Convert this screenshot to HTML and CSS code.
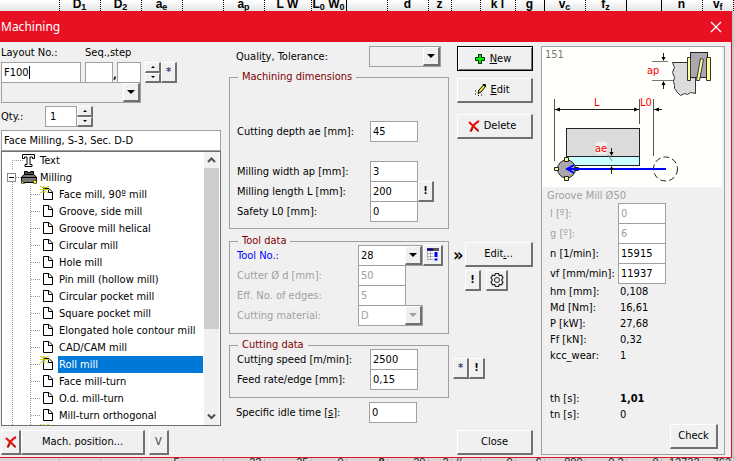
FILE: index.html
```
<!DOCTYPE html>
<html lang="en">
<head>
<meta charset="utf-8">
<title>Machining</title>
<link rel="stylesheet" href="styles.css">
</head>
<body>
<svg width="0" height="0" class="defs" aria-hidden="true">
  <symbol id="page" viewBox="0 0 12 14"><path d="M1.5 1.5h5.500l3.500 3.500v7.500h-9z" fill="#fff" stroke="#000"/><path d="M6.500 1.500v4h4" fill="none" stroke="#000"/></symbol>
  <symbol id="spark" viewBox="0 0 9 7"><path d="M0 .5h2M7 .5h2M3 1.500h1M5 1.500h1M0 3.500h9M3 5.500h1M5 5.500h1M0 6.500h2M7 6.500h1" stroke="#d8d800"/><path d="M2 1.500h1M4 0v7M6 1.500h1M2 5.500h1" stroke="#a8a83a"/></symbol>
  <symbol id="cross" viewBox="0 0 12 12"><path d="M1 2l9.500 9M11 1C7 3 4 7 2.500 11.500" fill="none" stroke="#e80c0c" stroke-width="2"/><path d="M3 11.500l2-3M8 9l2.500 2.500" stroke="#7a1010" fill="none"/></symbol>
</svg>
<div class="shell">
  <table class="sheet sheet-top">
    <colgroup><col class="w59"><col class="w41"><col class="w41"><col class="w41"><col class="w41"><col class="w41"><col class="w47"><col class="w35"><col class="w41"><col class="w41"><col class="w23"><col class="w29"><col class="w35"><col class="w29"><col class="w41"><col class="w41"><col class="w35"><col class="w41"><col></colgroup>
    <tr><th></th><th>D<sub>1</sub></th><th>D<sub>2</sub></th><th>a<sub>e</sub></th><th></th><th>a<sub>p</sub></th><th>L W</th><th class="solid">L<sub>0</sub> W<sub>0</sub></th><th></th><th>d</th><th>z</th><th></th><th>k l</th><th class="solid">g</th><th>v<sub>c</sub></th><th class="solid">f<sub>z</sub></th><th class="solid"></th><th>n</th><th>v<sub>f</sub></th></tr>
  </table>

  <main class="dialog">
    <header class="titlebar">
      <h1>Machining</h1>
      <button class="close" aria-label="Close window"><svg width="12" height="12" viewBox="0 0 12 12"><path d="M1 1l10 10M11 1L1 11" stroke="#fff" stroke-width="1.300"/></svg></button>
    </header>
    <div class="content">
      <section class="left">
        <div class="names"><label for="layout">Layout No.:</label><label for="seq">Seq.,step</label></div>
        <div class="line">
          <div class="field"><input id="layout" class="layout" value="F100"><i class="caret"></i></div>
          <input id="seq" class="seq" aria-label="Sequence">
          <b class="comma">,</b>
          <input class="step" aria-label="Step">
          <span class="spin"><button aria-label="Step up"><i class="up"></i></button><button aria-label="Step down"><i class="down"></i></button></span>
          <button class="tiny star">*</button>
        </div>
        <div class="combo wide"><select aria-label="Layout description"><option></option></select><i class="drop"></i></div>
        <div class="qty">
          <label for="qty">Qty.:</label>
          <input id="qty" value="1">
          <span class="spin"><button aria-label="Quantity up"><i class="up"></i></button><button aria-label="Quantity down"><i class="down"></i></button></span>
        </div>
        <input class="desc" aria-label="Description" value="Face Milling, S-3, Sec. D-D">
        <div class="tree">
          <ul>
            <li class="root"><svg class="ico" width="15" height="15" viewBox="0 0 15 15"><path d="M1.500 1.500h12v4h-2v-1.500h-2.500v7.500h2v2h-7v-2h2v-7.500h-2.500v1.500h-2z" fill="#fff" stroke="#000"/></svg>Text</li>
            <li class="root open"><i class="minus"></i><svg class="ico" width="16" height="15" viewBox="0 0 16 15"><path d="M3.500 1.500h3v1h3v-1h3v3h-9z" fill="#555" stroke="#000"/><path d="M.5 7l3-2.500h9l3 2.500v5.500h-15z" fill="#777" stroke="#000"/><path d="M1 7.500h14" stroke="#000"/><path d="M.5 10.500l3 3h-3zM12.500 10.500h3v3h-3z" fill="#ff0" stroke="#222" stroke-width=".6"/></svg>Milling
              <ul>
                <li><svg class="pg"><use href="#page"/></svg><svg class="sp"><use href="#spark"/></svg><span>Face mill, 90º mill</span></li>
                <li><svg class="pg"><use href="#page"/></svg><span>Groove, side mill</span></li>
                <li><svg class="pg"><use href="#page"/></svg><span>Groove mill helical</span></li>
                <li><svg class="pg"><use href="#page"/></svg><span>Circular mill</span></li>
                <li><svg class="pg"><use href="#page"/></svg><span>Hole mill</span></li>
                <li><svg class="pg"><use href="#page"/></svg><span>Pin mill (hollow mill)</span></li>
                <li><svg class="pg"><use href="#page"/></svg><span>Circular pocket mill</span></li>
                <li><svg class="pg"><use href="#page"/></svg><span>Square pocket mill</span></li>
                <li><svg class="pg"><use href="#page"/></svg><span>Elongated hole contour mill</span></li>
                <li><svg class="pg"><use href="#page"/></svg><span>CAD/CAM mill</span></li>
                <li><svg class="pg"><use href="#page"/></svg><svg class="sp"><use href="#spark"/></svg><span class="selected">Roll mill</span></li>
                <li><svg class="pg"><use href="#page"/></svg><span>Face mill-turn</span></li>
                <li><svg class="pg"><use href="#page"/></svg><span>O.d. mill-turn</span></li>
                <li><svg class="pg"><use href="#page"/></svg><span>Mill-turn orthogonal</span></li>
                <li><svg class="sp"><use href="#spark"/></svg></li>
              </ul>
            </li>
          </ul>
          <div class="scroll">
            <svg width="15" height="16" viewBox="0 0 15 16"><path d="M4 10l3.500-3.500L11 10" fill="none" stroke="#505050" stroke-width="2"/></svg>
            <div class="track"><div class="thumb"></div></div>
            <svg width="15" height="17" viewBox="0 0 15 17"><path d="M4 6.500l3.500 3.500L11 6.500" fill="none" stroke="#505050" stroke-width="2"/></svg>
          </div>
        </div>
        <div class="foot">
          <button class="del" aria-label="Delete"><svg width="12" height="12"><use href="#cross"/></svg></button>
          <button class="mach">Mach. position...</button>
          <button class="vee">V</button>
        </div>
      </section>

      <section class="mid">
        <div class="row outer quality"><label for="tol">Quali<u>t</u>y, Tolerance:</label><div class="combo"><select id="tol"><option></option></select><i class="drop"></i></div></div>
        <fieldset class="dims">
          <legend>Machining dimensions</legend>
          <div class="row apart"><label for="ae">Cutting depth ae [mm]:</label><input id="ae" value="45"></div>
          <div class="row"><label for="ap">Milling width ap [mm]:</label><input id="ap" value="3"></div>
          <div class="row"><label for="len">Milling length L [mm]:</label><input id="len" value="200"><button class="tiny">!</button></div>
          <div class="row"><label for="safe">Safety L0 [mm]:</label><input id="safe" value="0"></div>
        </fieldset>
        <fieldset class="tool">
          <legend>Tool data</legend>
          <div class="row"><label class="link" for="toolno">Tool No.:</label><div class="combo white"><select id="toolno"><option>28</option></select><i class="drop"></i></div><button class="tiny list" aria-label="Tool list"><svg width="14" height="14" viewBox="0 0 14 14"><path d="M1 1.500h12" stroke="#555" stroke-width="3"/><path d="M1 1.500h6" stroke="#008" stroke-width="2"/><path d="M1 3h6v9h-6z" fill="#fff"/><path d="M1 5.500h6M1 8.500h6M1 11.500h6M1.500 3v9M4.500 3v9" stroke="#aaa"/><path d="M10 4v5M10 10.500v2" stroke="#00f" stroke-width="3"/></svg></button></div>
          <div class="row off"><label for="dia">Cutter Ø d [mm]:</label><input id="dia" value="50" disabled></div>
          <div class="row off"><label for="edges">Eff. No. of edges:</label><input id="edges" value="5" disabled></div>
          <div class="row off"><label for="mat">Cutting material:</label><div class="combo white"><select id="mat" disabled><option>D</option></select><i class="drop"></i></div></div>
        </fieldset>
        <fieldset class="cut">
          <legend>Cutting data</legend>
          <div class="row"><label for="speed">Cutt<u>i</u>ng speed [m/min]:</label><input id="speed" value="2500"></div>
          <div class="row"><label for="feed">Feed rate/edge [mm]:</label><input id="feed" value="0,15"></div>
        </fieldset>
        <div class="row outer idle"><label for="idle">Specific idle time [<u>s</u>]:</label><input id="idle" value="0"></div>
      </section>

      <section class="actions">
        <div class="big">
          <button class="default"><svg width="12" height="12" viewBox="0 0 12 12"><path d="M4.500 1.500h3v3h3v3h-3v3h-3v-3h-3v-3h3z" fill="#0e0" stroke="#020"/></svg><span><u>N</u>ew</span></button>
          <button><svg width="12" height="12" viewBox="0 0 12 12"><path d="M4 9.500l1-3.500 4.500-5 2 1.500-4.500 5.500z" fill="#ee3" stroke="#000"/><path d="M9 0l3 2" stroke="#000" stroke-width="2"/><path d="M1 7h1M1 10h1M4 11.500h1M7 11h1" stroke="#000"/></svg><span><u>E</u>dit</span></button>
          <button class="delete"><svg width="12" height="12"><use href="#cross"/></svg><span>Delete</span></button>
        </div>
        <div class="tooledit">
          <b>»</b><button class="edit2">Edit<u>.</u>..</button>
          <div class="pair"><button class="tiny">!</button><button class="tiny gear" aria-label="Settings"><svg width="16" height="16" viewBox="0 0 16 16" fill="none" stroke="#222"><path d="M6.500 1.500h3l.8 2 2.200-.3 1.500 2.600-1.400 2.200 1.400 2.200-1.500 2.600-2.200-.3-.8 2h-3l-.8-2-2.200.3L2 10.200 3.400 8 2 5.800l1.500-2.600 2.200.3z" stroke-width="1.200"/><circle cx="8" cy="8" r="2.500"/></svg></button></div>
        </div>
        <div class="marks"><button class="tiny star">*</button><button class="tiny">!</button></div>
        <button class="shut">Close</button>
      </section>

      <section class="results">
        <svg class="diagram" viewBox="0 0 180 140" preserveAspectRatio="xMinYMin meet">
          <rect width="180" height="140" fill="#fffffc"/>
          <text x="3" y="11" class="num">151</text>
          <g stroke="#222" fill="none">
            <path d="M110 14.500h16M110 33.500h29" stroke="#777"/>
            <path d="M148 15.500h-17.500l2 5-2 5 2 5-1 4 1 4v3l3 4 3 3 4-2 3 1 3-2 5 1v-31z" fill="#dcdcdc" stroke="#333"/>
            <rect x="148.500" y="5.500" width="17" height="25" fill="#aaa8ac"/>
            <path d="M145.500 10.500h3v23h-3zM164.500 10.500h4v23h-4zM158.500 11.500l3 1-4 21h-3z" fill="#ffffa0" stroke="#333"/>
            <path d="M121.500 6v7M121.500 35v7"/>
            <path d="M12.500 52v62M97.500 52v25M111.500 52v57" stroke="#555"/>
            <path d="M13 62.500h84M112 62.500h8"/>
            <rect x="24.500" y="81.500" width="73" height="28" fill="#dcdcdc"/>
            <rect x="24.500" y="109.500" width="73" height="9" fill="#ccffff"/>
            <path d="M69.500 101v5M69.500 121v6"/>
            <path d="M66 108l4 6" stroke="#888"/>
            <circle cx="24.500" cy="122" r="9" fill="#a9a9ad"/>
            <path d="M22.500 110.500h4v4h-4zM22.500 129.500h4v4h-4zM12.500 120.500h4v3h-4zM32.500 120.500h4v3h-4z" fill="#ffff99"/>
            <circle cx="123.500" cy="122" r="12" stroke-dasharray="6 3"/>
            <path d="M27 122h97M32 118l-7 4 7 4" stroke="#00f" stroke-width="2"/>
          </g>
          <path d="M119.500 10h4l-2 4zM119.500 38h4l-2-4zM13 62.500l5-2v4zM97 62.500l-5-2v4zM112 62.500l5-2v4zM67.500 105h4l-2 4zM67.500 123h4l-2-4z"/>
          <rect x="54" y="95" width="11" height="12" fill="#f0f0f0"/>
          <g class="dim"><text x="105" y="27">ap</text><text x="52" y="59">L</text><text x="98" y="59">L0</text><text x="53" y="105">ae</text></g>
        </svg>
        <p class="toolname">Groove Mill Ø50</p>
        <div class="res off"><label for="l">l [º]:</label><input id="l" value="0" disabled></div>
        <div class="res off"><label for="g">g [º]:</label><input id="g" value="6" disabled></div>
        <div class="res"><label for="n">n [1/min]:</label><input id="n" value="15915"></div>
        <div class="res"><label for="vf">vf [mm/min]:</label><input id="vf" value="11937"></div>
        <dl>
          <dt>hm [mm]:</dt><dd>0,108</dd>
          <dt>Md [Nm]:</dt><dd>16,61</dd>
          <dt>P [kW]:</dt><dd>27,68</dd>
          <dt>Ff [kN]:</dt><dd>0,32</dd>
          <dt>kcc_wear:</dt><dd>1</dd>
        </dl>
        <dl class="times">
          <dt>th [s]:</dt><dd><b>1,01</b></dd>
          <dt>tn [s]:</dt><dd>0</dd>
        </dl>
        <button class="check">Check</button>
      </section>
    </div>
  </main>
  <aside class="edge"></aside>
  <div class="under">
    <table class="sheet sheet-bottom">
      <colgroup><col class="w59"><col class="w41"><col class="w41"><col class="w41"><col class="w41"><col class="w41"><col class="w47"><col class="w35"><col class="w41"><col class="w41"><col class="w23"><col class="w29"><col class="w35"><col class="w29"><col class="w41"><col class="w41"><col class="w35"><col class="w41"><col></colgroup>
      <tr><td></td><td></td><td></td><td>5</td><td></td><td>22</td><td>25</td><td>0</td><td><b>8</b></td><td>20</td><td>2</td><td class="start">//</td><td>0</td><td>6</td><td>800</td><td>0.2</td><td>0</td><td>12732</td><td>762</td></tr>
    </table>
  </div>
</div>
</body>
</html>
```
FILE: styles.css
```
* { box-sizing: border-box; }
body { margin: 0; font: 11px/14px "DejaVu Sans Condensed", "DejaVu Sans", sans-serif; color: #000; }
.defs { position: absolute; }
.shell { display: grid; grid-template: 11px minmax(0, 1fr) 3px / minmax(0, 1fr) 2px; height: 100vh; overflow: hidden; background: #ddd; }
button, input, select { font: inherit; color: inherit; margin: 0; padding: 0; border-radius: 0; }
button { display: flex; align-items: center; justify-content: center; background: #f0f0f0; border: 1px solid #fff; border-right: 2px solid #707070; border-bottom: 2px solid #707070; }
input { height: 21px; padding: 0 0 0 2px; border: 1px solid #a0a0a0; background: #fff; width: 48px; min-width: 0; outline: 0; }
p, h1, dl, dd, ul, fieldset, legend { margin: 0; padding: 0; }
ul { list-style: none; }

.sheet { width: 100%; table-layout: fixed; border-collapse: collapse; font-family: "Liberation Sans", sans-serif; }
.sheet th, .sheet td { padding: 0; white-space: nowrap; }
.sheet-top { grid-column: 1 / 3; height: 11px; background: linear-gradient(#fff, #e4e4e4); }
.sheet-top th { font-size: 12px; line-height: 8px; height: 11px; border-right: 1px dotted #000; vertical-align: top; }
.sheet-top th.solid { border-right: 1px solid #000; }
.sheet-top sub { font-size: 9px; line-height: 4px; vertical-align: -2px; }
.under { grid-column: 1 / 3; height: 3px; overflow: hidden; background: #d8d8d8; }
.sheet-bottom td { font-size: 11px; line-height: 8px; text-align: right; padding-right: 2px; border-right: 1px solid #bbb; color: #222; }
.sheet-bottom td.start { text-align: left; padding-left: 4px; }
.w59 { width: 59px; } .w47 { width: 47px; } .w41 { width: 41px; } .w35 { width: 35px; } .w29 { width: 29px; } .w23 { width: 23px; }
.edge { background: #c8c8c8; }

.dialog { display: flex; flex-direction: column; background: #f0f0f0; border-right: 1px solid #e81123; border-bottom: 1px solid #e81123; min-height: 0; }
.titlebar { display: flex; justify-content: space-between; align-items: center; height: 31px; padding: 0 9px 0 1px; background: #e81123; color: #fff; }
.titlebar h1 { font: 12px/16px "Noto Sans", sans-serif; }
.close { background: none; border: 0; }
.content { flex: 1; min-height: 0; display: grid; grid-template-columns: 220fr 228fr 92fr 184fr; padding: 4px 6px 2px 1px; }

.left { display: flex; flex-direction: column; min-height: 0; }
.names { display: flex; height: 16px; }
.names label:first-child { width: 84px; }
.line { display: flex; height: 20px; }
.field { position: relative; }
.caret { position: absolute; left: 28px; top: 4px; width: 1px; height: 13px; background: #000; }
.line .layout { width: 80px; }
.line .seq { width: 28px; margin-left: 4px; }
.line .step { width: 24px; }
.comma { width: 4px; padding-top: 6px; }
.spin { display: flex; flex-direction: column; width: 16px; height: 21px; margin-left: 4px; }
.spin button { flex: 1; width: 16px; min-height: 0; }
.spin i { border: 2px solid transparent; }
.spin .up { border-top: 0; border-bottom-color: #000; }
.spin .down { border-bottom: 0; border-top-color: #000; }
.tiny { width: 16px; height: 21px; font-weight: bold; }
.star { color: #347; }
.combo { position: relative; height: 21px; }
.combo select { appearance: none; width: 100%; height: 21px; padding: 0 18px 0 2px; border: 1px solid #a0a0a0; background: #f0f0f0; opacity: 1; display: block; }
.combo.white select { background: #fff; }
.drop { position: absolute; right: 1px; top: 1px; bottom: 1px; width: 17px; display: grid; place-items: center; background: #f0f0f0; border: 1px solid #fff; border-right: 2px solid #707070; border-bottom: 2px solid #707070; pointer-events: none; }
.drop::after { content: ""; border: 4px solid transparent; border-top-color: #000; border-bottom: 0; }
.wide { width: 140px; flex: none; }
.qty { display: flex; margin: 3px 0; height: 21px; align-items: center; }
.qty label { width: 44px; }
.qty input { width: 32px; padding-left: 4px; }
.qty .spin { margin: 0; }
.desc { width: 100%; flex: none; }
.tree { flex: 1; min-height: 0; display: flex; border: 1px solid #707070; background: #fff; overflow: hidden; }
.tree > ul { flex: 1; min-width: 0; }
.root { position: relative; line-height: 17px; padding-left: 38px; }
.root::before { content: ""; position: absolute; left: 10px; top: 8px; width: 10px; bottom: 0; border: 1px dotted #999; border-right: 0; border-bottom: 0; }
.ico { position: absolute; left: 19px; top: 1px; }
.minus { position: absolute; left: 5px; top: 4px; width: 9px; height: 9px; border: 1px solid #888; background: #fff; display: grid; place-items: center; }
.minus::after { content: ""; width: 5px; height: 1px; background: #000; }
.root ul { margin-left: -10px; border-left: 1px dotted #999; }
.root li { position: relative; height: 17px; display: flex; padding-left: 27px; }
.root li::before { content: ""; position: absolute; left: 0; top: 8px; width: 9px; border-top: 1px dotted #999; }
.root li span { flex: 1; padding-left: 1px; margin-right: 1px; white-space: nowrap; }
.root li .selected { background: #0078d7; color: #fff; }
.pg { position: absolute; left: 11px; top: 1px; width: 12px; height: 14px; }
.sp { position: absolute; left: 9px; top: 0; width: 9px; height: 7px; }
.scroll { width: 15px; display: flex; flex-direction: column; background: #f0f0f0; margin-right: 1px; }
.scroll svg { flex: none; }
.track { flex: 1; min-height: 0; }
.thumb { height: 67%; background: #cdcdcd; }
.foot { display: flex; height: 25px; margin-top: 4px; flex: none; }
.del { width: 20px; } .mach { width: 124px; } .vee { width: 20px; margin-left: 4px; color: #444; }

.mid { padding-left: 8px; }
.row { display: grid; grid-template-columns: 133px 48px auto; align-items: center; justify-content: start; height: 21px; margin-top: -1px; }
.row.outer { margin-left: 7px; }
.row.quality { grid-template-columns: 133px 72px; margin-top: 0; }
fieldset { border: 1px solid #a0a0a0; padding: 0 0 7px 7px; min-width: 0; }
legend { margin-left: 1px; padding: 0 4px; height: 8px; line-height: 8px; color: #800000; }
fieldset .row:nth-of-type(1) { margin-top: 0; }
.dims { margin-top: 6px; padding-bottom: 6px; }
.dims .apart { margin: 40px 0 20px; }
fieldset .apart:nth-of-type(1) { margin-top: 40px; }
.tool { margin-top: 8px; }
.tool .row { grid-template-columns: 121px 48px 17px 19px; }
.tool .combo { grid-column: 2 / 4; }
.list { width: 20px; }
.cut { margin-top: 7px; }
.row.idle { margin-top: 4px; }
.link { color: #00f; }
.off { color: #a0a0a0; }
.off .drop::after { border-top-color: #a0a0a0; }

.actions { display: flex; flex-direction: column; padding: 0 8px 0 4px; min-height: 0; }
.big { margin-left: 4px; display: grid; gap: 7px; }
.big button { height: 25px; gap: 4px; padding-right: 5px; }
.big .default { border: 1px solid #000; box-shadow: inset 1px 1px #fff, inset -1px -1px #707070; }
.big .delete { margin-top: 4px; }
.tooledit { margin-top: 103px; display: grid; grid-template-columns: 12px 1fr; row-gap: 3px; align-items: center; }
.tooledit b { font-size: 18px; }
.edit2 { height: 25px; }
.pair { grid-column: 2; display: flex; gap: 5px; }
.gear { width: 22px; }
.marks { display: flex; margin-top: 67px; }
.shut { height: 25px; margin: auto 0 0 4px; flex: none; }

.results { display: flex; flex-direction: column; border: 1px solid #a0a0a0; min-height: 0; }
.diagram { display: block; width: 100%; height: 140px; flex: none; }
.num { font-size: 11px; fill: #777; }
.dim { font: 11px "DejaVu Sans Condensed", sans-serif; fill: #f00; }
.toolname { height: 16px; padding: 2px 0 0 5px; color: #a0a0a0; }
.res { display: grid; grid-template-columns: 68px 48px; align-items: center; height: 21px; margin: -1px 0 0 8px; }
.toolname + .res { margin-top: 0; }
.results dl { display: grid; grid-template-columns: 70px 1fr; grid-auto-rows: 16px; margin-left: 8px; line-height: 16px; }
.results .times { margin-top: 27px; }
.check { width: 48px; height: 25px; margin: auto 6px 5px auto; flex: none; }
```
